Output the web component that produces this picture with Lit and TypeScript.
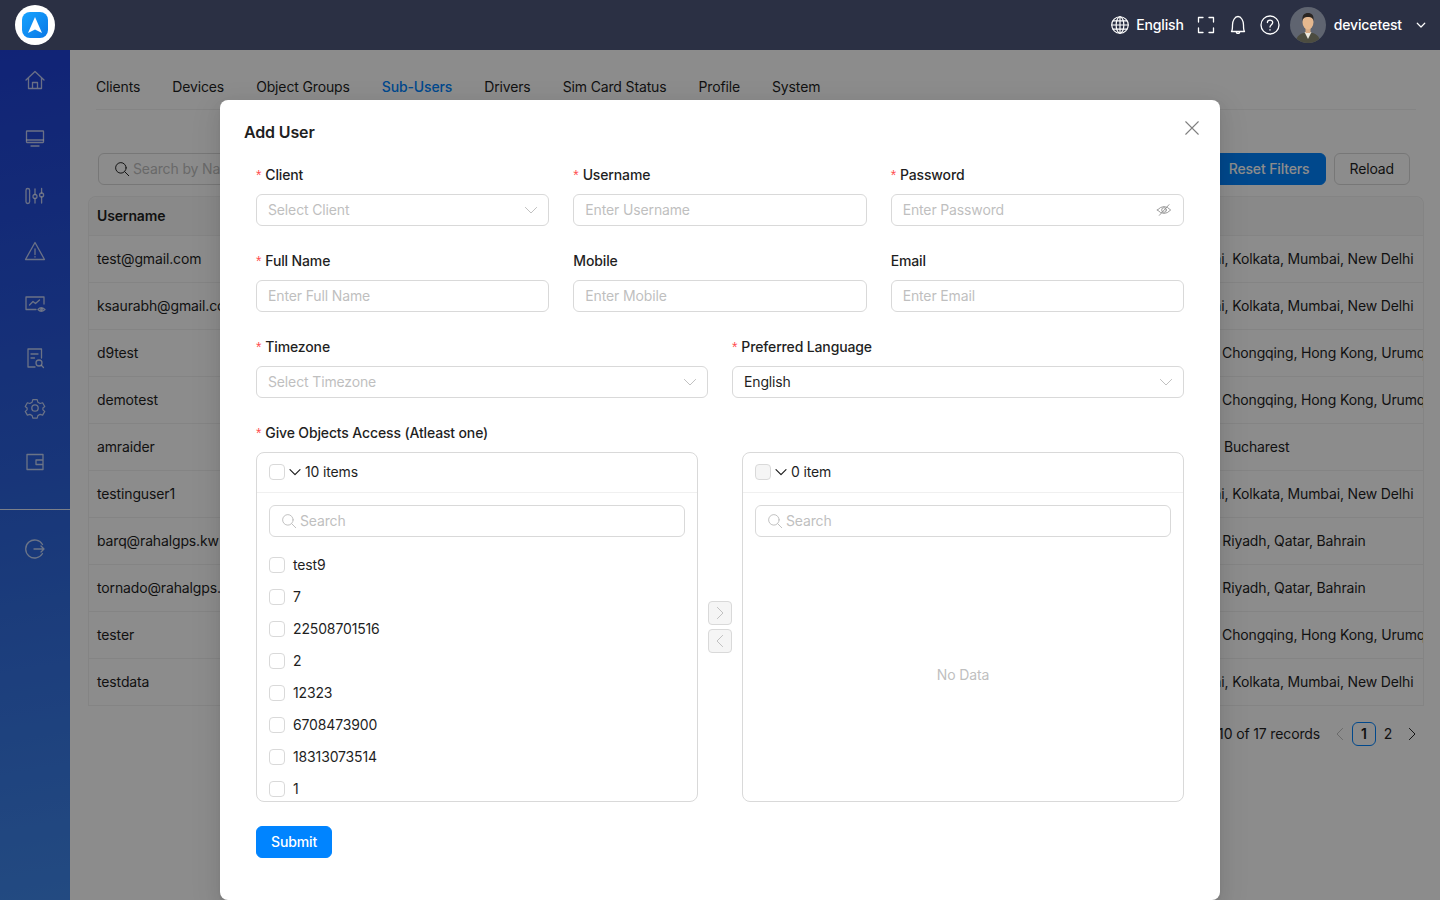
import { LitElement, html, css, svg } from "lit";
import { customElement } from "lit/decorators.js";

const icon = (body: unknown, size = 24, cls = "") =>
  html`<svg class=${cls} width=${size} height=${size} viewBox="0 0 24 24" fill="none" stroke="currentColor" stroke-width="1.3" stroke-linecap="round" stroke-linejoin="round">${body}</svg>`;

const NAV = [
  svg`<path d="M3 12 12 3.500 21 12M5.500 10v10.500h13V10M9.500 20.500v-6h5v6"/>`,
  svg`<rect x="3.500" y="5" width="17" height="11.500" rx="0.500"/><path d="M8 20h8M3.500 14h17" />`,
  svg`<rect x="3" y="4.500" width="3.600" height="15" rx="1.800"/><circle cx="12" cy="12.500" r="2"/><path d="M12 5v5.500M12 14.500V19"/><circle cx="18.600" cy="11" r="2"/><path d="M18.600 4.500V9M18.600 13v6"/>`,
  svg`<path d="M12 3.500 21.500 20.500H2.500ZM12 10v5.500M12 17.600v.4"/>`,
  svg`<path d="M13 17.500H3V5h18v7M6.500 13l3.500-3.500 2.500 2L16.500 8"/><path d="M15 17.500q3-3.400 7 0q-4 3.400-7 0Z"/><circle cx="18.500" cy="17.500" r=".8"/>`,
  svg`<path d="M12 21H5V3h13.500v9M8 8h7M8 12h3.500"/><circle cx="16" cy="17" r="3"/><path d="m18.300 19.300 2.200 2.200"/>`,
  svg`<path d="m9.600 3 4.800 0 .7 2.700 2.500 1.400 2.700-.8 2.300 4-2 1.700v2l2 1.700-2.300 4-2.700-.8-2.500 1.400-.7 2.700H9.600l-.7-2.700-2.500-1.400-2.700.8-2.300-4 2-1.700v-2l-2-1.700 2.300-4 2.700.8 2.500-1.400Z" transform="translate(12 12) scale(.92) translate(-12 -12)"/><circle cx="12" cy="12" r="3.200"/>`,
  svg`<path d="M4 4.500h16v15H4ZM20 10h-7v4.500h7"/>`,
];
const NAV_GAPS = [0, 34, 34, 31, 29, 30, 26, 30];

const GLOBE = svg`<circle cx="12" cy="12" r="9"/><ellipse cx="12" cy="12" rx="4.200" ry="9"/><path d="M12 3v18M3 12h18M4.300 7.500h15.400M4.300 16.500h15.400"/>`;
const FULLSCREEN = svg`<path d="M9 4.500H4.500V9M15 4.500h4.500V9M9 19.500H4.500V15M15 19.500h4.500V15"/>`;
const BELL = svg`<path d="M5.500 18.500c1-1.200 1-3 1-6.500 0-4 2.200-8.500 5.500-8.500s5.500 4.500 5.500 8.500c0 3.500 0 5.300 1 6.500ZM10.300 18.500c0 2.600 3.400 2.600 3.400 0"/>`;
const HELP = svg`<circle cx="12" cy="12" r="9"/><path d="M9.400 9.600c0-3.400 5.300-3.400 5.300-.1 0 2.300-2.700 2.200-2.700 4.600M12 16.700v.3"/>`;
const CHEVRON_DOWN = svg`<path d="m4.500 8.500 7.500 7.500 7.500-7.500"/>`;
const LEFT = svg`<path d="m15.500 4.500-7.500 7.500 7.500 7.500"/>`;
const RIGHT = svg`<path d="m8.500 4.500 7.500 7.500-7.500 7.500"/>`;
const SEARCH = svg`<circle cx="10.500" cy="10.500" r="7"/><path d="m15.500 15.500 5.500 5.500"/>`;
const CLOSE = svg`<path d="m4.500 4.500 15 15M19.500 4.500l-15 15"/>`;
const EYE_OFF = svg`<path d="M2 12q10-10.500 20 0q-10 10.500-20 0Z"/><circle cx="12" cy="12" r="3.500"/><path d="M5 20 19.500 4"/>`;
const LOGOUT = svg`<path d="M19.500 7.500A9 9 0 1 0 19.500 16.500M11 12h10M18 9l3 3-3 3"/>`;

const USERS = [
  ["test@gmail.com", "Chennai, Kolkata, Mumbai, New Delhi"],
  ["ksaurabh@gmail.com", "Chennai, Kolkata, Mumbai, New Delhi"],
  ["d9test", "Beijing, Chongqing, Hong Kong, Urumqi"],
  ["demotest", "Beijing, Chongqing, Hong Kong, Urumqi"],
  ["amraider", "Athens, Bucharest"],
  ["testinguser1", "Chennai, Kolkata, Mumbai, New Delhi"],
  ["barq@rahalgps.kw", "Kuwait, Riyadh, Qatar, Bahrain"],
  ["tornado@rahalgps.kw", "Kuwait, Riyadh, Qatar, Bahrain"],
  ["tester", "Beijing, Chongqing, Hong Kong, Urumqi"],
  ["testdata", "Chennai, Kolkata, Mumbai, New Delhi"],
];
const TABS = ["Clients", "Devices", "Object Groups", "Sub-Users", "Drivers", "Sim Card Status", "Profile", "System"];
const OBJECTS = ["test9", "7", "22508701516", "2", "12323", "6708473900", "18313073514", "1", "4"];

@customElement("app-root")
export class AppRoot extends LitElement {
  static styles = css`
    :host {
      display: block;
      position: relative;
      width: 1440px;
      height: 900px;
      overflow: hidden;
      background: #fff;
      color: #1f1f1f;
      font-family: Inter, "Noto Sans", sans-serif;
      font-size: 14px;
      line-height: 22px;
      letter-spacing: -0.14px;
    }
    svg {
      display: block;
      flex: none;
    }

    .topbar {
      position: relative;
      z-index: 3;
      height: 50px;
      background: #2b3044;
      color: #fff;
      display: flex;
      align-items: center;
      padding: 0 13px 0 15px;
    }
    .logo {
      flex: none;
    }
    .top-right {
      margin-left: auto;
      display: flex;
      align-items: center;
      font-weight: 500;
    }
    .lang {
      margin: 0 10px 0 5px;
    }
    .top-gap {
      margin-right: 8px;
    }
    .avatar {
      margin-right: 8px;
    }
    .caret {
      margin-left: 13px;
    }
    .caret svg {
      stroke-width: 2.400;
    }

    .shell {
      display: flex;
      height: 850px;
    }
    .sidebar {
      width: 70px;
      flex: none;
      background: linear-gradient(170deg, #1f41d7 0%, #2c62dc 50%, #4088ec 100%);
      color: rgba(255, 255, 255, 0.72);
      padding-top: 18px;
      box-sizing: border-box;
    }
    .nav-icon {
      display: flex;
      justify-content: center;
    }
    .side-rule {
      height: 1px;
      background: rgba(255, 255, 255, 0.85);
      margin-top: 35px;
    }
    .logout {
      margin-top: 27px;
    }

    .main {
      flex: 1;
      min-width: 0;
      display: flex;
      flex-direction: column;
    }
    .tabs {
      display: flex;
      gap: 32px;
      margin: 26px 24px 0 26px;
      padding-bottom: 11px;
      border-bottom: 1px solid #f0f0f0;
    }
    .tab-on {
      color: #0084ff;
      font-weight: 500;
    }
    .filters {
      display: flex;
      justify-content: space-between;
      margin: 43px 30px 0 28px;
    }
    .page-search {
      width: 320px;
      height: 32px;
      box-sizing: border-box;
      border: 1px solid #d9d9d9;
      border-radius: 6px;
      display: flex;
      align-items: center;
      gap: 2px;
      padding-left: 14px;
      color: #bfbfbf;
    }
    .page-search svg {
      color: #1f1f1f;
    }
    .filter-btns {
      display: flex;
      gap: 8px;
    }
    .btn {
      height: 32px;
      box-sizing: border-box;
      padding: 0 15px;
      border-radius: 6px;
      border: 1px solid #d9d9d9;
      background: #fff;
      font: inherit;
      letter-spacing: inherit;
      color: inherit;
    }
    .btn-primary {
      background: #0084ff;
      border-color: #0084ff;
      color: #fff;
      font-weight: 500;
    }
    .btn-submit {
      padding: 0 14px;
    }
    .table {
      margin: 11px 16px 0 18px;
      border: 1px solid #f0f0f0;
      border-bottom: 0;
      border-radius: 8px 8px 0 0;
    }
    .row {
      display: grid;
      grid-template-columns: 1fr 264px;
      height: 47px;
      box-sizing: border-box;
      border-bottom: 1px solid #f0f0f0;
      align-items: center;
    }
    .row > div {
      padding-left: 8px;
      white-space: nowrap;
      overflow: hidden;
    }
    .row > div + div {
      padding-left: 12px;
    }
    .row-head {
      height: 39px;
      background: #fafafa;
      font-weight: 600;
      border-radius: 8px 8px 0 0;
    }
    .pager {
      display: flex;
      justify-content: flex-end;
      align-items: center;
      margin: 16px 16px 0 0;
    }
    .pager-text {
      margin-right: 8px;
    }
    .pager-cell {
      width: 24px;
      height: 24px;
      box-sizing: border-box;
      display: flex;
      align-items: center;
      justify-content: center;
    }
    .pager-on {
      border: 1px solid #0084ff;
      border-radius: 6px;
      font-weight: 600;
    }
    .pager-off {
      color: #bfbfbf;
    }

    .mask {
      position: absolute;
      inset: 0;
      z-index: 1;
      background: rgba(0, 0, 0, 0.45);
    }
    .modal {
      position: absolute;
      z-index: 2;
      top: 100px;
      left: 220px;
      width: 1000px;
      height: 800px;
      box-sizing: border-box;
      background: #fff;
      border-radius: 8px;
      box-shadow: 0 6px 16px rgba(0, 0, 0, 0.08), 0 3px 6px -4px rgba(0, 0, 0, 0.12), 0 9px 28px 8px rgba(0, 0, 0, 0.05);
    }
    .close {
      position: absolute;
      top: 18px;
      right: 18px;
      color: #7f7f7f;
    }
    .title {
      font-size: 16px;
      font-weight: 600;
      line-height: 24px;
      padding: 20px 24px 0;
    }
    .form {
      padding: 20px 36px 0;
    }
    .grid3 {
      display: grid;
      grid-template-columns: repeat(3, 1fr);
      column-gap: 24px;
    }
    .grid2 {
      display: grid;
      grid-template-columns: repeat(2, 1fr);
      column-gap: 24px;
    }
    .field {
      margin-bottom: 24px;
      min-width: 0;
    }
    .label {
      height: 22px;
      margin-bottom: 8px;
      font-weight: 500;
    }
    .req::before {
      content: "*";
      color: #ff4d4f;
      margin-right: 4px;
      font-family: "Liberation Sans", sans-serif;
    }
    .input {
      height: 32px;
      box-sizing: border-box;
      border: 1px solid #d9d9d9;
      border-radius: 6px;
      display: flex;
      align-items: center;
      justify-content: space-between;
      padding: 0 11px;
      color: #bfbfbf;
    }
    .input.filled {
      color: #1f1f1f;
    }
    .input svg {
      color: #bfbfbf;
    }
    .input .eye {
      color: #8c8c8c;
    }
    .input .sel {
      margin-right: -3px;
    }
    .transfer {
      display: flex;
      align-items: center;
      margin-bottom: 24px;
    }
    .panel {
      width: 442px;
      height: 350px;
      flex: none;
      box-sizing: border-box;
      border: 1px solid #d9d9d9;
      border-radius: 8px;
      display: flex;
      flex-direction: column;
      overflow: hidden;
    }
    .panel-head {
      height: 40px;
      flex: none;
      box-sizing: border-box;
      border-bottom: 1px solid #f0f0f0;
      display: flex;
      align-items: center;
      padding: 0 12px 1px;
    }
    .panel-head svg {
      margin: 0 2px;
      stroke-width: 1.800;
    }
    .check {
      width: 16px;
      height: 16px;
      flex: none;
      box-sizing: border-box;
      border: 1px solid #d9d9d9;
      border-radius: 4px;
      background: #fff;
    }
    .check.off {
      background: #f5f5f5;
    }
    .panel-search {
      margin: 12px;
      justify-content: flex-start;
      gap: 2px;
      flex: none;
    }
    .panel-search svg {
      margin-left: -1px;
    }
    .list {
      flex: 1;
      min-height: 0;
      overflow: hidden;
    }
    .item {
      height: 32px;
      display: flex;
      align-items: center;
      gap: 8px;
      padding: 0 12px;
    }
    .empty {
      flex: 1;
      display: flex;
      align-items: center;
      justify-content: center;
      color: #bfbfbf;
    }
    .ops {
      flex: 1;
      display: flex;
      flex-direction: column;
      align-items: center;
      gap: 4px;
    }
    .op {
      width: 24px;
      height: 24px;
      box-sizing: border-box;
      border: 1px solid #d9d9d9;
      border-radius: 4px;
      background: #f5f5f5;
      color: #bfbfbf;
      display: flex;
      align-items: center;
      justify-content: center;
    }
  `;

  private panel(count: string, disabled: boolean, body: unknown) {
    return html`
      <div class="panel">
        <div class="panel-head">
          <span class="check ${disabled ? "off" : ""}"></span>
          ${icon(CHEVRON_DOWN, 16)}
          <span>${count}</span>
        </div>
        <div class="input panel-search">${icon(SEARCH, 18)}<span>Search</span></div>
        ${body}
      </div>
    `;
  }

  private field(label: string, req: boolean, text: string, suffix?: unknown, filled = false) {
    return html`
      <div class="field">
        <div class="label ${req ? "req" : ""}">${label}</div>
        <div class="input ${filled ? "filled" : ""}"><span>${text}</span>${suffix}</div>
      </div>
    `;
  }

  render() {
    const caret = icon(CHEVRON_DOWN, 18, "sel");
    return html`
      <header class="topbar">
        <svg class="logo" width="40" height="40" viewBox="0 0 40 40">
          <defs>
            <linearGradient id="lg" x1="0" y1="0" x2="1" y2="1">
              <stop offset="0" stop-color="#16a3ff" />
              <stop offset="1" stop-color="#0a78e6" />
            </linearGradient>
          </defs>
          <circle cx="20" cy="20" r="20" fill="#fff" />
          <rect x="7" y="7" width="26" height="26" rx="8" fill="url(#lg)" />
          <path d="M20 12 27 28 20 24.500 13 28Z" fill="#fff" />
        </svg>
        <div class="top-right">
          ${icon(GLOBE, 22)}
          <span class="lang">English</span>
          <span class="top-gap">${icon(FULLSCREEN, 24)}</span>
          <span class="top-gap">${icon(BELL, 24)}</span>
          <span class="top-gap">${icon(HELP, 24)}</span>
          <svg class="avatar" width="36" height="36" viewBox="0 0 36 36">
            <clipPath id="av"><circle cx="18" cy="18" r="18" /></clipPath>
            <g clip-path="url(#av)">
              <rect width="36" height="36" fill="#5f6470" />
              <path d="M6 36c0-8 5-10 12-11 7 1 12 3 12 11Z" fill="#4c4c40" />
              <path d="M14.500 25 18 32l3.500-7Z" fill="#ece9df" />
              <rect x="15.500" y="20" width="5" height="6" fill="#d8ab84" />
              <ellipse cx="18" cy="15" rx="5.500" ry="7.500" fill="#e5b88f" />
              <path d="M12.500 14c-.8-6 2-8 5.500-8s6.300 2 5.500 8c-.6-3-2-4-5.500-4s-4.900 1-5.500 4Z" fill="#2a2522" />
            </g>
          </svg>
          <span>devicetest</span>
          <span class="caret">${icon(CHEVRON_DOWN, 12)}</span>
        </div>
      </header>

      <div class="shell">
        <aside class="sidebar">
          ${NAV.map(
            (n, i) => html`<div class="nav-icon" style="margin-top:${NAV_GAPS[i]}px">${icon(n, 24)}</div>`,
          )}
          <div class="side-rule"></div>
          <div class="nav-icon logout">${icon(LOGOUT, 24)}</div>
        </aside>

        <main class="main">
          <nav class="tabs">
            ${TABS.map((t) => html`<span class=${t === "Sub-Users" ? "tab-on" : ""}>${t}</span>`)}
          </nav>
          <div class="filters">
            <div class="page-search">${icon(SEARCH, 18)}<span>Search by Name</span></div>
            <div class="filter-btns">
              <button class="btn btn-primary">Reset Filters</button>
              <button class="btn">Reload</button>
            </div>
          </div>
          <div class="table">
            <div class="row row-head"><div>Username</div><div>Zone</div></div>
            ${USERS.map(([name, zone]) => html`<div class="row"><div>${name}</div><div>${zone}</div></div>`)}
          </div>
          <div class="pager">
            <span class="pager-text">Showing 1 to 10 of 17 records</span>
            <span class="pager-cell pager-off">${icon(LEFT, 18)}</span>
            <span class="pager-cell pager-on">1</span>
            <span class="pager-cell">2</span>
            <span class="pager-cell">${icon(RIGHT, 18)}</span>
          </div>
        </main>
      </div>

      <div class="mask"></div>

      <section class="modal">
        <span class="close">${icon(CLOSE, 20)}</span>
        <div class="title">Add User</div>
        <div class="form">
          <div class="grid3">
            ${this.field("Client", true, "Select Client", caret)}
            ${this.field("Username", true, "Enter Username")}
            ${this.field("Password", true, "Enter Password", icon(EYE_OFF, 16, "eye"))}
            ${this.field("Full Name", true, "Enter Full Name")}
            ${this.field("Mobile", false, "Enter Mobile")}
            ${this.field("Email", false, "Enter Email")}
          </div>
          <div class="grid2">
            ${this.field("Timezone", true, "Select Timezone", caret)}
            ${this.field("Preferred Language", true, "English", caret, true)}
          </div>
          <div class="label req">Give Objects Access (Atleast one)</div>
          <div class="transfer">
            ${this.panel(
              "10 items",
              false,
              html`<div class="list">
                ${OBJECTS.map((o) => html`<div class="item"><span class="check"></span><span>${o}</span></div>`)}
              </div>`,
            )}
            <div class="ops">
              <span class="op">${icon(RIGHT, 18)}</span>
              <span class="op">${icon(LEFT, 18)}</span>
            </div>
            ${this.panel("0 item", true, html`<div class="empty">No Data</div>`)}
          </div>
          <button class="btn btn-primary btn-submit">Submit</button>
        </div>
      </section>
    `;
  }
}
